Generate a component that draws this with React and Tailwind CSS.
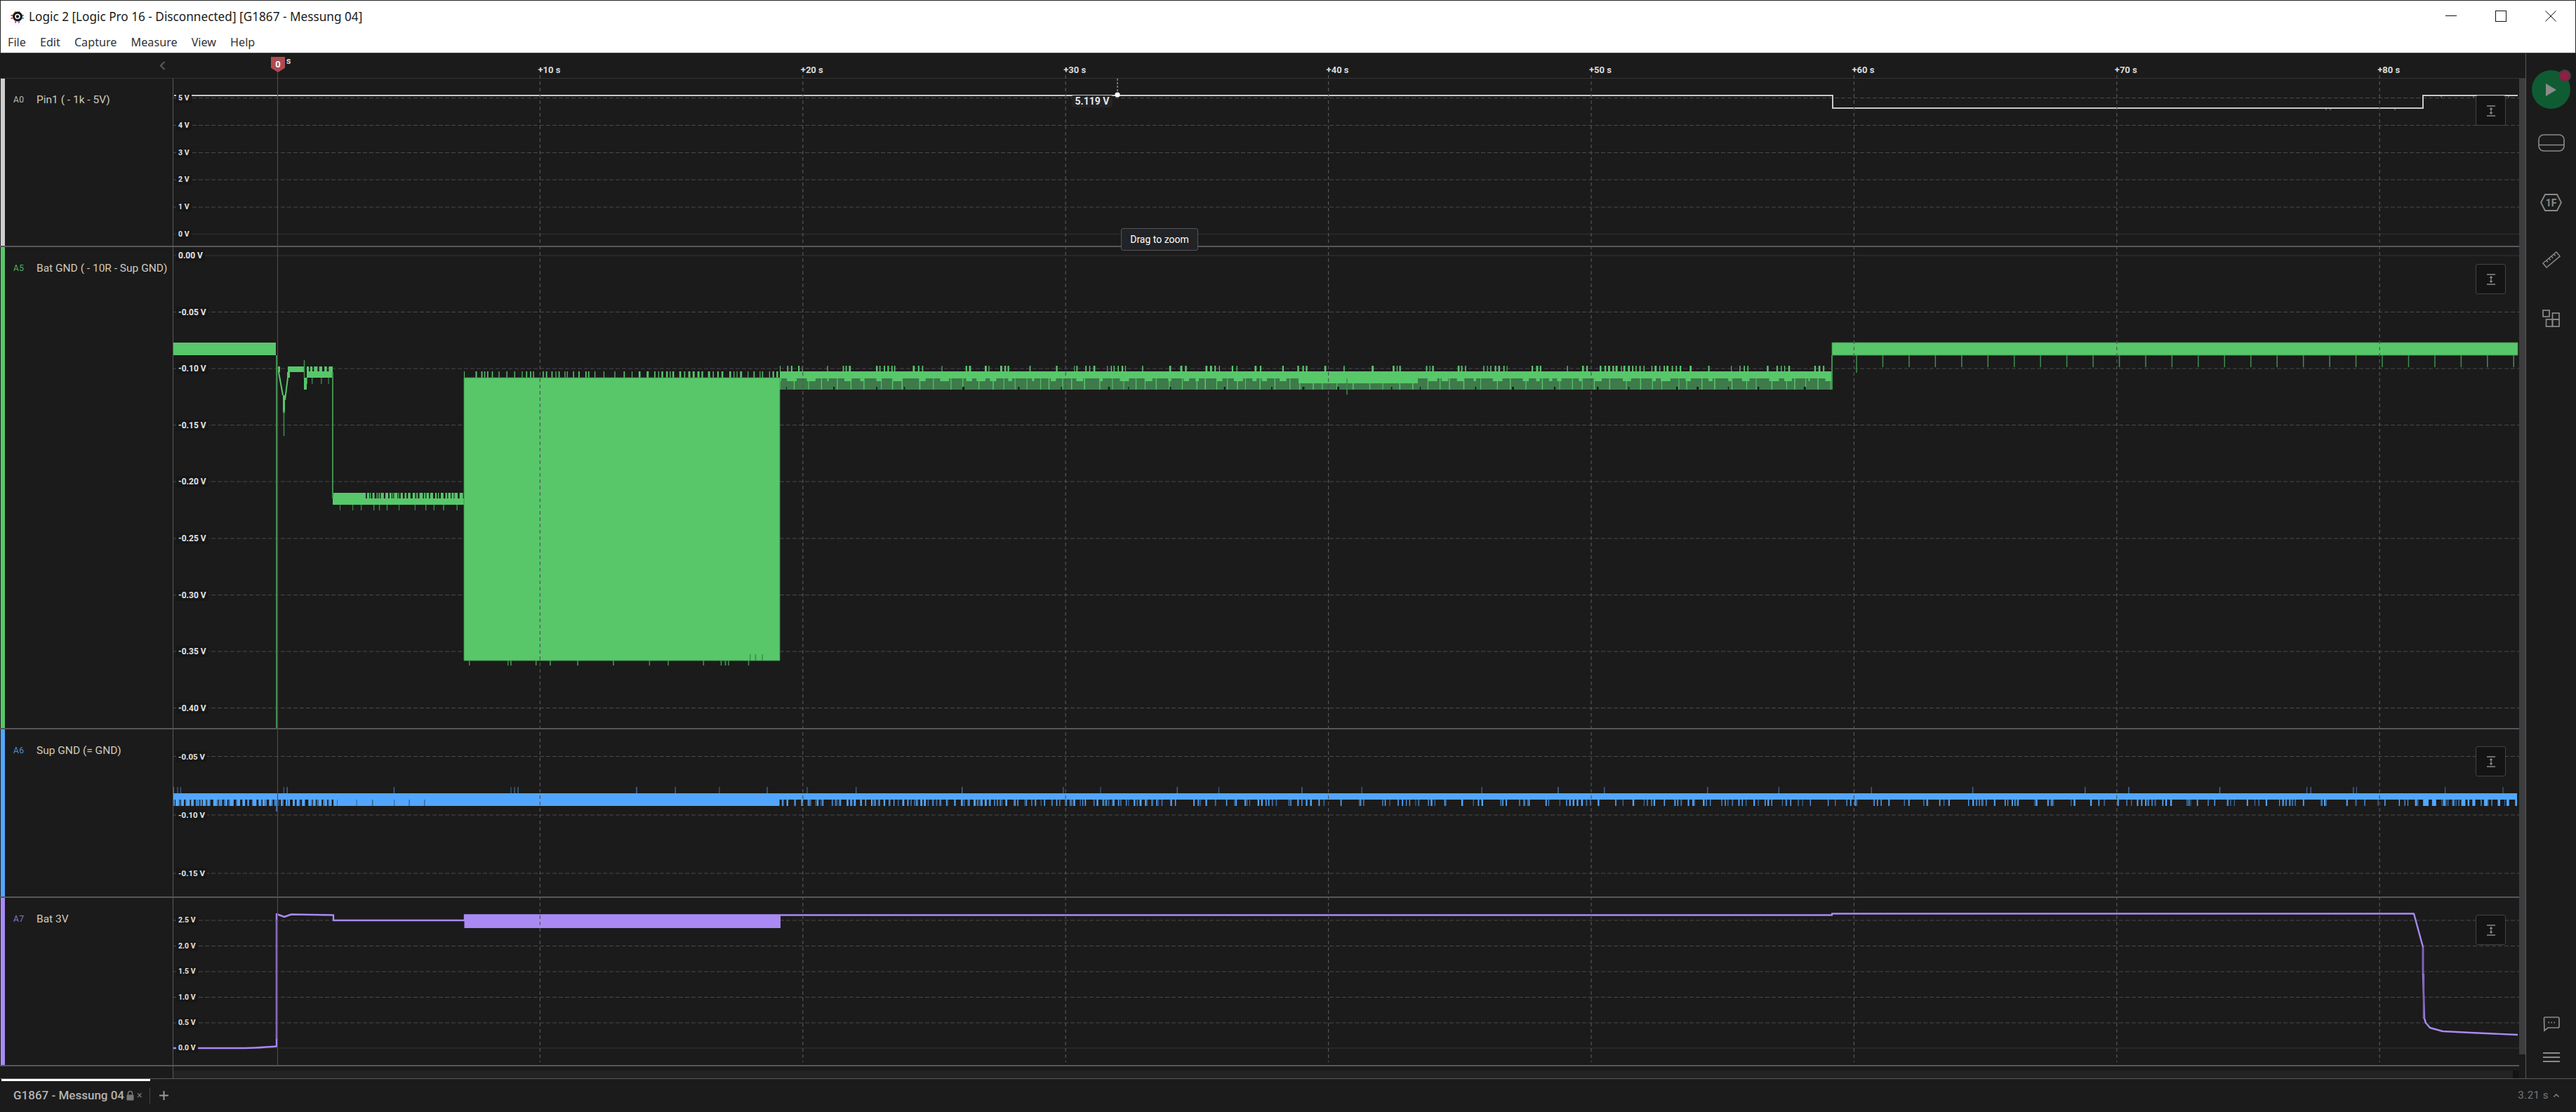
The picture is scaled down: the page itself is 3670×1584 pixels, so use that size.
import React from 'react';

const BG = '#1b1b1b';
const GREEN = '#58c76a';
const GREEN_DARK = '#3f8f4e';
const GREEN_MUTED = '#3e7a4b';
const BLUE = '#52a6ff';
const BLUE_DARK = '#3b6fa6';
const PURPLE = '#a98af3';

const TIME_TICKS = [10, 20, 30, 40, 50, 60, 70, 80].map((s) => ({ s, x: 395 + s * 37.44 }));

// waveforms are drawn in page coordinates, each row svg just sets its viewBox
const rect = (x0, y0, x1, y1) => `M${x0} ${y0}H${x1}V${y1}H${x0}Z`;

function makeRng(seed) {
  let s = seed;
  return () => {
    s = (s * 16807) % 2147483647;
    return s / 2147483647;
  };
}

// alternating on/off bars, used for the noisy edges of the traces.
// off[2] is the chance of a short gap, so bars bunch up like the real noise does
function bars(x0, x1, y0, y1, on, off, seed) {
  const rng = makeRng(seed);
  const bunch = off[2] || 0;
  let x = x0;
  let d = '';
  while (x < x1) {
    const w = on[0] + rng() * (on[1] - on[0]);
    const gap = rng() < bunch ? 2 + rng() * 3 : off[0] + rng() * (off[1] - off[0]);
    const end = Math.min(x + w, x1);
    d += rect(x.toFixed(1), y0, end.toFixed(1), y1);
    x = end + gap;
  }
  return d;
}

function GridLines({ lines }) {
  return lines.map((l) =>
    l.solid ? (
      <path key={l.y} d={`M247 ${l.y}H3589`} stroke="#2c2c2e" strokeWidth="1.5" />
    ) : (
      <path key={l.y} d={`M247 ${l.y}H3589`} stroke="#4a4a4c" strokeWidth="1.2" strokeDasharray="6 3" />
    )
  );
}

function ExpandButton({ top }) {
  return (
    <div
      className="absolute left-[3280px] w-[43px] h-[43px] rounded-[3px] border border-[#444446] bg-[#141414] flex items-center justify-center"
      style={{ top }}
    >
      <svg width="14" height="16" viewBox="0 0 14 16" fill="none">
        <path d="M1 1H13M1 15H13" stroke="#8a8a8a" strokeWidth="1.3" />
        <path d="M7 3.5V12.5" stroke="#8a8a8a" strokeWidth="1.3" />
        <path d="M4.5 6L7 3L9.5 6ZM4.5 10L7 13L9.5 10Z" fill="#8a8a8a" />
      </svg>
    </div>
  );
}

function ChannelRow({ top, height, color, id, idColor, name, lines, labelClass, children }) {
  return (
    <div className="flex border-b-2 border-[#57575a]" style={{ height }}>
      <div className="ml-px w-[6px] shrink-0" style={{ backgroundColor: color }} />
      <div className="w-[240px] shrink-0 border-r border-[#59595c] flex items-start pt-[20px] pl-[12px]">
        <span
          className="w-[33px] text-[12px] leading-[20px] font-['Roboto',sans-serif] tracking-[0.3px]"
          style={{ color: idColor }}
        >
          {id}
        </span>
        <span className="text-[15.5px] leading-[20px] text-[#cfc9bd] font-['Roboto',sans-serif] whitespace-nowrap">
          {name}
        </span>
      </div>
      <div className="relative flex-1">
        <svg
          className="absolute inset-0 w-full h-full"
          viewBox={`247 ${top} 3342 ${height - 2}`}
          preserveAspectRatio="none"
        >
          <GridLines lines={lines} />
          {children}
        </svg>
        {lines.map((l) => (
          <span
            key={l.label}
            className={`absolute left-[4px] -translate-y-1/2 px-[3px] rounded-[2px] bg-[#171717] font-bold text-[#e4e4e4] whitespace-nowrap font-['Roboto',sans-serif] ${labelClass}`}
            style={{ top: l.y - top }}
          >
            {l.label}
          </span>
        ))}
        <ExpandButton top={24} />
      </div>
    </div>
  );
}

const A0_LINES = [
  { y: 139.5, label: '5 V' },
  { y: 178.5, label: '4 V' },
  { y: 217.5, label: '3 V' },
  { y: 256, label: '2 V' },
  { y: 295, label: '1 V' },
  { y: 333.5, label: '0 V', solid: true },
];

const A5_LINES = [
  { y: 364, label: '0.00 V', solid: true },
  { y: 444.5, label: '-0.05 V' },
  { y: 525, label: '-0.10 V' },
  { y: 605.5, label: '-0.15 V' },
  { y: 686, label: '-0.20 V' },
  { y: 767, label: '-0.25 V' },
  { y: 847.5, label: '-0.30 V' },
  { y: 928, label: '-0.35 V' },
  { y: 1008.5, label: '-0.40 V' },
];

const A6_LINES = [
  { y: 1077.5, label: '-0.05 V' },
  { y: 1161, label: '-0.10 V' },
  { y: 1244, label: '-0.15 V' },
];

const A7_LINES = [
  { y: 1311, label: '2.5 V' },
  { y: 1347.5, label: '2.0 V' },
  { y: 1384, label: '1.5 V' },
  { y: 1420.5, label: '1.0 V' },
  { y: 1457, label: '0.5 V' },
  { y: 1493, label: '0.0 V', solid: true },
];

function Pin1Trace() {
  const d = 'M248 136H2611V154H3452V136H3587';
  return (
    <>
      <path d={d} fill="none" stroke="#c9c9c9" strokeWidth="2" />
      <path d="M3478 137V139M3524 137V139M3574 137V139M3314 155V157M3320 155V157M3412 155V157" stroke="#8a8a8a" />
    </>
  );
}

const RIGHT_TICKS = [];
for (let x = 2645; x < 3587; x += 37.45) RIGHT_TICKS.push(x);

function BatGndTrace() {
  const bright =
    rect(247, 488, 393, 506) +
    // start-up part after the marker
    rect(394, 522, 399, 530) +
    rect(410, 522, 434, 530) +
    rect(409, 530, 413, 538) +
    rect(403, 563, 406, 588) +
    rect(433, 538, 437, 555) +
    rect(437, 529, 474, 538) +
    bars(437, 474, 522, 529, [3, 7], [1, 4], 11) +
    // plateau at -0.22 V
    rect(474, 710, 661, 719) +
    rect(474, 702, 520, 710) +
    bars(520, 661, 702, 710, [1, 5], [1, 3], 23) +
    // the big block
    rect(661, 538, 1111, 941) +
    bars(661, 900, 529, 538, [1, 2], [5, 16, 0.4], 37) +
    bars(900, 1111, 529, 538, [1, 3], [2, 9, 0.3], 41) +
    // long band, upper half
    rect(1111, 529, 2610, 539) +
    bars(1111, 2610, 521, 529, [1, 3], [8, 40, 0.55], 53) +
    // level after +60 s
    rect(2610, 488, 3587, 506);
  const muted = rect(1111, 539, 2610, 555);
  const brightOnMuted =
    rect(1850, 539, 2020, 546) +
    bars(1111, 2610, 539, 543, [2, 14], [6, 30], 61) +
    bars(1111, 2610, 539, 555, [1, 1.5], [10, 24], 67);
  const notches = bars(1120, 2600, 551, 555, [1, 3], [22, 90], 71);
  const darkTicks =
    bars(437, 474, 538, 547, [1, 1.5], [5, 12], 73) +
    bars(484, 661, 719, 727, [1, 1.5], [6, 22], 79) +
    bars(668, 1105, 941, 948, [1.5, 1.8], [12, 70, 0.3], 83) +
    bars(1068, 1094, 932, 941, [1.5, 2], [4, 12], 89);
  return (
    <>
      <path d={muted} fill={GREEN_MUTED} />
      <path d={bright + brightOnMuted} fill={GREEN} />
      <path d={notches} fill={BG} />
      <path d={darkTicks} fill={GREEN_DARK} />
      <path d={rect(661, 538, 1111, 941)} fill="none" stroke={GREEN_DARK} strokeWidth="0.8" />
      <path d={rect(2610, 488, 3587, 506)} fill="none" stroke={GREEN_DARK} strokeWidth="0.8" />
      <path d="M397 530L403 563M410 538L406 570" stroke={GREEN} strokeWidth="2" fill="none" />
      <path d="M404.5 585V621M433.5 513V538M1919 539V562" stroke={GREEN_DARK} strokeWidth="1.5" fill="none" />
      <path d="M394 506V1037M474 530V710M2610 506V555" stroke={GREEN_DARK} strokeWidth="2" fill="none" />
      {RIGHT_TICKS.map((x, i) => (
        <path key={x} d={`M${x} 506V${i === 0 ? 531 : 523}`} stroke={GREEN_DARK} strokeWidth="1.5" />
      ))}
    </>
  );
}

function SupGndTrace() {
  const main =
    rect(247, 1130, 3586, 1139) +
    bars(247, 475, 1139, 1148, [2, 6], [1, 5], 139) +
    rect(475, 1139, 1110, 1148) +
    bars(1110, 1650, 1139, 1148, [1, 3], [4, 12, 0.4], 101) +
    bars(1650, 3430, 1139, 1148, [1, 2.5], [8, 30, 0.4], 113) +
    bars(3430, 3586, 1139, 1148, [1, 8], [3, 10], 127);
  const dark =
    bars(247, 475, 1139, 1148, [1, 2], [4, 16, 0.3], 97) +
    bars(480, 625, 1139, 1148, [1, 2], [10, 30], 103) +
    bars(1110, 1650, 1139, 1148, [1, 2], [6, 18, 0.3], 131) +
    bars(1650, 3586, 1139, 1148, [1, 2], [14, 50, 0.4], 137) +
    bars(247, 3586, 1121, 1130, [1, 1.5], [50, 190, 0.2], 107);
  return (
    <>
      <path d={main} fill={BLUE} />
      <path d={dark} fill={BLUE_DARK} />
      <path d="M394 1148V1156" stroke={BLUE_DARK} strokeWidth="2" />
    </>
  );
}

function Bat3VTrace() {
  const line =
    'M247 1493H350C370 1493 380 1491 394 1490.5V1302L405 1306L415 1302.5L475 1303.5V1311H662V1303.5H1112V1303.5L2610 1303.5V1301.5H3439L3452 1349V1387L3454 1451L3456 1457L3462 1464L3480 1469L3520 1471L3587 1474';
  return (
    <>
      <path d={rect(661.5, 1303, 1112, 1322)} fill={PURPLE} />
      <path d={line} fill="none" stroke={PURPLE} strokeWidth="2.4" strokeLinejoin="round" />
      <path d="M394.5 1310V1480M3452 1349V1387M3453 1387V1451" stroke="#7f66b8" strokeWidth="2.4" fill="none" />
    </>
  );
}

function TimeOverlay() {
  return (
    <svg
      className="absolute left-0 top-0 w-full h-full overflow-visible pointer-events-none"
      viewBox="0 112 3589 1424"
      preserveAspectRatio="none"
    >
      {TIME_TICKS.map((t) => (
        <path key={t.s} d={`M${t.x} 107V1513`} stroke="#555558" strokeWidth="1.2" strokeDasharray="5 4" />
      ))}
      <path d="M395.5 103V1518" stroke="#6d3b41" strokeWidth="1.2" />
      <path d="M1592 112V132" stroke="#85858a" strokeWidth="1.6" strokeDasharray="3 2" />
      <circle cx="1592" cy="135" r="3.6" fill="#ffffff" />
    </svg>
  );
}

function TimeRuler() {
  return (
    <div className="relative h-[36px] border-b border-[#343436] font-['Roboto',sans-serif]">
      <svg className="absolute left-[227px] top-[11px]" width="9" height="13" viewBox="0 0 9 13" fill="none">
        <path d="M7.5 1L2 6.5L7.5 12" stroke="#555558" strokeWidth="2.4" />
      </svg>
      <span className="absolute left-[395px] top-[1px] text-[13px] font-bold leading-[20px] text-[#d8d8d8] translate-x-[2px]">
        <span className="text-[#c98a8e]">0</span> s
      </span>
      <div className="absolute left-[386px] top-[5px] w-[20px] h-[22px] bg-[#b04a50] [clip-path:polygon(0_0,100%_0,100%_72%,50%_100%,0_72%)] flex items-center justify-center text-[13px] text-white font-bold">
        0
      </div>
      {TIME_TICKS.map((t) => (
        <span
          key={t.s}
          className="absolute top-[14px] text-[13px] leading-[20px] font-bold text-[#dcdcdc] whitespace-nowrap"
          style={{ left: t.x - 3 }}
        >
          +{t.s} s
        </span>
      ))}
    </div>
  );
}

function SideIcon({ children, mt }) {
  return <div className={`flex justify-center ${mt}`}>{children}</div>;
}

function Sidebar() {
  return (
    <div className="w-[72px] shrink-0 border-l border-[#59595c] flex flex-col items-center">
      <div className="relative mt-[24px] w-[55px] h-[55px] rounded-full bg-[#0f5c32] flex items-center justify-center">
        <svg width="16" height="18" viewBox="0 0 16 18">
          <path d="M0 0L15 9L0 18Z" fill="#8b8b8b" />
        </svg>
        <div className="absolute right-[-1px] top-[-1px] w-[18px] h-[18px] rounded-full bg-[#8e1f46] border-2 border-[#3f3f42]" />
      </div>
      <SideIcon mt="mt-[36px]">
        <svg width="38" height="25" viewBox="0 0 38 25" fill="none" stroke="#8a8a8a" strokeWidth="1.6">
          <rect x="1" y="1" width="36" height="23" rx="7" />
          <path d="M1 15.5H37" />
        </svg>
      </SideIcon>
      <SideIcon mt="mt-[60px]">
        <svg width="31" height="25" viewBox="0 0 31 25" fill="none" stroke="#8a8a8a" strokeWidth="1.8">
          <path d="M7 1H24L30 12.5L24 24H7L1 12.5Z" />
          <text x="15.5" y="18" textAnchor="middle" fontSize="14" fontWeight="700" fontFamily="Roboto, sans-serif" fill="#8a8a8a" stroke="none">
            1F
          </text>
        </svg>
      </SideIcon>
      <SideIcon mt="mt-[57px]">
        <svg width="26" height="24" viewBox="0 0 26 24" fill="none" stroke="#8a8a8a" strokeWidth="1.5">
          <path d="M1 17L20 1L25 7L6 23Z" />
          <path d="M6 13L8 15.5M9.5 10L11.5 12.5M13 7L15 9.5M16.5 4L18.5 6.5" />
        </svg>
      </SideIcon>
      <SideIcon mt="mt-[59px]">
        <svg width="25" height="25" viewBox="0 0 25 25" fill="none" stroke="#8a8a8a" strokeWidth="1.7">
          <rect x="1" y="1" width="9" height="9" />
          <rect x="5.5" y="14" width="9" height="10" />
          <rect x="14.5" y="5" width="9.5" height="9" />
          <rect x="14.5" y="14" width="9.5" height="10" />
        </svg>
      </SideIcon>
      <div className="mt-auto mb-[23px] flex flex-col items-center gap-[29px]">
        <svg width="24" height="22" viewBox="0 0 24 22" fill="none" stroke="#8a8a8a" strokeWidth="1.7">
          <path d="M3 1H21C22 1 23 2 23 3V14C23 15 22 16 21 16H7L2 20L1.5 3C1.5 2 2 1 3 1Z" />
          <path d="M7.5 8.5H9M11.5 8.5H13M15.5 8.5H17" strokeWidth="1.8" />
        </svg>
        <div className="flex flex-col gap-[3.5px]">
          <div className="w-[24px] h-[2.5px] bg-[#8a8a8a]" />
          <div className="w-[24px] h-[2.5px] bg-[#8a8a8a]" />
          <div className="w-[24px] h-[2.5px] bg-[#8a8a8a]" />
        </div>
      </div>
    </div>
  );
}

function AppLogo() {
  return (
    <svg width="24" height="24" viewBox="0 0 24 24">
      <rect x="1" y="1" width="22" height="22" rx="5" fill="#ffffff" stroke="#ececec" strokeWidth="0.6" />
      <path d="M7.5 3.5H9.5V6H7.5ZM13.5 3.5H15.5V6H13.5Z" fill="#f5b82e" />
      <path d="M2.5 9H5V11H2.5ZM2.5 13H5V15H2.5Z" fill="#ee4a3f" />
      <path d="M18.5 9H21V11H18.5ZM18.5 13H21V15H18.5Z" fill="#27aef0" />
      <path d="M8 18H10V21H8ZM13 18H15V21H13Z" fill="#b866e8" />
      <circle cx="12" cy="11.5" r="7" fill="#161616" />
      <circle cx="12" cy="11.5" r="3" fill="none" stroke="#ffffff" strokeWidth="1.6" />
    </svg>
  );
}

function TitleBar() {
  return (
    <div className="h-[76px] shrink-0 bg-white border-t border-l border-r border-b border-t-[#222] border-l-[#222] border-r-[#222] border-b-[#48484a] font-['Noto_Sans',sans-serif]">
      <div className="h-[46px] flex items-center pl-[12px]">
        <AppLogo />
        <span className="ml-[4px] text-[17.2px] text-[#1a1a1a] whitespace-nowrap">
          Logic 2 [Logic Pro 16 - Disconnected] [G1867 - Messung 04]
        </span>
        <div className="ml-auto -mt-[3px] flex items-center h-full pr-[27px] gap-[55px]">
          <div className="w-[16px] h-px bg-[#111]" />
          <div className="w-[16px] h-[16px] border border-[#111]" />
          <svg width="16" height="16" viewBox="0 0 16 16" stroke="#111" strokeWidth="1">
            <path d="M0.5 0.5L15.5 15.5M15.5 0.5L0.5 15.5" />
          </svg>
        </div>
      </div>
      <div className="flex gap-[20px] pl-[10px] text-[16.2px] leading-[26px] text-[#333]">
        {['File', 'Edit', 'Capture', 'Measure', 'View', 'Help'].map((m) => (
          <span key={m}>{m}</span>
        ))}
      </div>
    </div>
  );
}

function BottomBar() {
  return (
    <div className="relative flex-1 border-t border-[#59595c] flex items-center font-['Roboto',sans-serif]">
      <div className="absolute left-[2px] top-0 w-[212px] h-[3px] bg-white" />
      <span className="ml-[19px] text-[17px] font-medium text-[#b3b3b3] whitespace-nowrap">G1867 - Messung 04</span>
      <svg className="ml-[3px]" width="11" height="15" viewBox="0 0 11 15">
        <path d="M2.5 7V4.5C2.5 0.5 8.5 0.5 8.5 4.5V7" fill="none" stroke="#77777a" strokeWidth="1.5" />
        <rect x="0.5" y="6.5" width="10" height="8" rx="1" fill="#77777a" />
      </svg>
      <span className="ml-[4px] text-[14px] text-[#77777a]">×</span>
      <div className="ml-[10px] w-px h-[22px] bg-[#444446]" />
      <svg className="ml-[13px]" width="13" height="13" viewBox="0 0 13 13" stroke="#9a9a9a" strokeWidth="2">
        <path d="M6.5 0V13M0 6.5H13" />
      </svg>
      <div className="ml-auto pr-[24px] flex items-center gap-[7px] text-[15px] tracking-[0.5px] text-[#77777a]">
        <span>3.21 s</span>
        <svg width="8" height="5" viewBox="0 0 8 5" fill="none" stroke="#8a8a8a" strokeWidth="1.4">
          <path d="M0.5 4.5L4 1L7.5 4.5" />
        </svg>
      </div>
    </div>
  );
}

export default function App() {
  return (
    <div className="w-full h-screen flex flex-col overflow-hidden bg-[#1b1b1b]">
      <TitleBar />
      <div className="h-[1460px] shrink-0 flex">
        <div className="w-[3598px] shrink-0 flex flex-col">
          <TimeRuler />
          <div className="flex-1 flex min-h-0">
            <div className="relative w-[3589px] shrink-0">
              <ChannelRow top={112} height={240} color="#cfcfcf" id="A0" idColor="#bdbdbd" name="Pin1 ( - 1k - 5V)" lines={A0_LINES} labelClass="text-[10.5px] leading-[14px]">
                <Pin1Trace />
              </ChannelRow>
              <ChannelRow top={352} height={687} color={GREEN} id="A5" idColor="#4fb360" name="Bat GND ( - 10R - Sup GND)" lines={A5_LINES} labelClass="text-[12px] leading-[16px]">
                <BatGndTrace />
              </ChannelRow>
              <ChannelRow top={1039} height={240} color={BLUE} id="A6" idColor="#4b8fd6" name="Sup GND (= GND)" lines={A6_LINES} labelClass="text-[11.5px] leading-[15px]">
                <SupGndTrace />
              </ChannelRow>
              <ChannelRow top={1279} height={240} color={PURPLE} id="A7" idColor="#8f74cf" name="Bat 3V" lines={A7_LINES} labelClass="text-[10.5px] leading-[14px]">
                <Bat3VTrace />
              </ChannelRow>
              <div className="h-[17px] flex">
                <div className="w-[247px] shrink-0 border-r border-[#59595c]" />
                <div className="flex-1 flex items-end">
                  <div className="flex-1 h-[11px] bg-[#232324]" />
                  <div className="w-[9px] h-[11px] bg-[#131313]" />
                </div>
              </div>
              <TimeOverlay />
              <div className="absolute left-[1527px] top-[24px] w-[58px] h-[17px] rounded-[2px] bg-[#232325] flex items-center justify-center text-[14px] font-bold text-[#e8e8e8] font-['Roboto',sans-serif]">
                5.119 V
              </div>
              <div className="absolute left-[1597px] top-[213px] w-[110px] h-[32px] rounded-[3px] border border-[#55555a] bg-[#212326] flex items-center justify-center text-[14px] text-white font-['Roboto',sans-serif]">
                Drag to zoom
              </div>
            </div>
            <div className="w-[9px] shrink-0">
              <div className="h-[1390px] bg-[#3d3d3f]" />
            </div>
          </div>
        </div>
        <Sidebar />
      </div>
      <BottomBar />
    </div>
  );
}
